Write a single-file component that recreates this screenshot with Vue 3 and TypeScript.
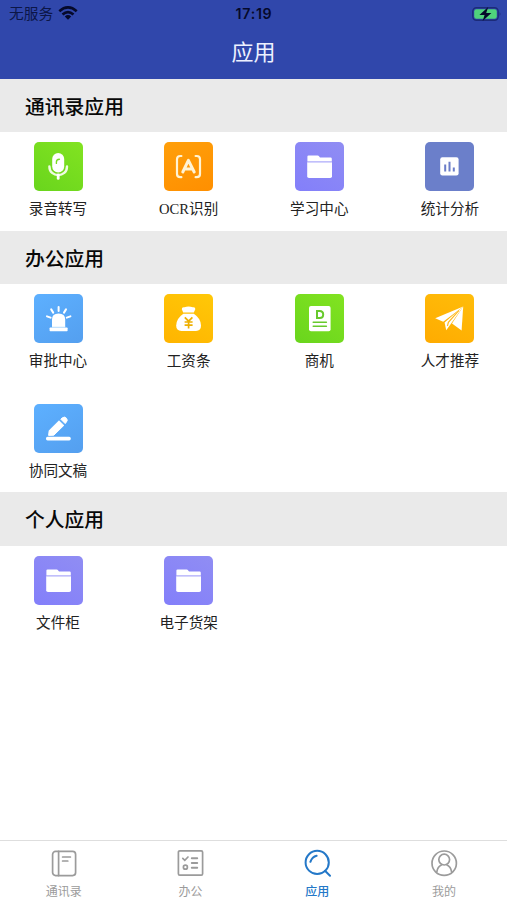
<script setup lang="ts">
type IconName = 'mic' | 'ocr' | 'folder' | 'chart' | 'alarm' | 'salary' | 'document' | 'plane' | 'pen'
type Tone = 'green' | 'orange' | 'violet' | 'indigo' | 'blue' | 'yellow' | 'amber'

interface AppEntry {
  label: string
  icon: IconName
  tone: Tone
}
interface Section {
  title: string
  apps: AppEntry[]
}
interface Tab {
  label: string
  icon: 'book' | 'list' | 'search' | 'user'
}

const sections: Section[] = [
  {
    title: '通讯录应用',
    apps: [
      { label: '录音转写', icon: 'mic', tone: 'green' },
      { label: 'OCR识别', icon: 'ocr', tone: 'orange' },
      { label: '学习中心', icon: 'folder', tone: 'violet' },
      { label: '统计分析', icon: 'chart', tone: 'indigo' },
    ],
  },
  {
    title: '办公应用',
    apps: [
      { label: '审批中心', icon: 'alarm', tone: 'blue' },
      { label: '工资条', icon: 'salary', tone: 'yellow' },
      { label: '商机', icon: 'document', tone: 'green' },
      { label: '人才推荐', icon: 'plane', tone: 'amber' },
      { label: '协同文稿', icon: 'pen', tone: 'blue' },
    ],
  },
  {
    title: '个人应用',
    apps: [
      { label: '文件柜', icon: 'folder', tone: 'violet' },
      { label: '电子货架', icon: 'folder', tone: 'violet' },
    ],
  },
]

const tabs: Tab[] = [
  { label: '通讯录', icon: 'book' },
  { label: '办公', icon: 'list' },
  { label: '应用', icon: 'search' },
  { label: '我的', icon: 'user' },
]
const activeTab = '应用'
</script>

<template>
  <div class="screen">
    <header class="header">
      <div class="status">
        <div class="carrier">
          <span>无服务</span>
          <svg class="wifi" width="20" height="14" viewBox="0 0 20 14">
            <g fill="none" stroke="#05092a" stroke-width="2.7">
              <path d="M1.3 5.2Q10-2.4 18.7 5.2" />
              <path d="M4.5 8.6Q10 3.8 15.5 8.6" />
            </g>
            <path d="M6.8 10.4Q10 7.7 13.2 10.4L10 13.7Z" fill="#05092a" />
          </svg>
        </div>
        <span class="time">17:19</span>
        <svg class="battery" width="30" height="16" viewBox="0 0 30 16">
          <rect x=".8" y="1.8" width="25.4" height="12.4" rx="3.6" fill="none" stroke="#1c2b78" stroke-width="1.4" />
          <rect x="2.2" y="3.2" width="22.6" height="9.6" rx="2.2" fill="#4fd37c" />
          <path d="M27.6 5.8Q29.4 8 27.6 10.2Z" fill="#1c2b78" />
          <path d="M16.2 1L7.4 8.9H12.6L10.6 15L19.4 6.9H14.2Z" fill="#05092a" />
        </svg>
      </div>
      <h1 class="title">应用</h1>
    </header>

    <main class="content">
      <section v-for="section in sections" :key="section.title">
        <h2 class="section-title">{{ section.title }}</h2>
        <div class="grid">
          <div v-for="app in section.apps" :key="app.label" class="app">
            <div class="tile" :class="app.tone">
              <svg width="49" height="49" viewBox="0 0 49 49">
                <g v-if="app.icon === 'mic'">
                  <rect x="18.2" y="11" width="12" height="19.6" rx="6" fill="#fff" />
                  <path d="M15.4 24.4C15.4 36 33 36 33 24.4" fill="none" stroke="#effbe2" stroke-width="2.4" stroke-linecap="round" />
                  <path d="M24.2 33V36.4" fill="none" stroke="#fff" stroke-width="2.8" stroke-linecap="round" />
                  <path d="M22.4 21.4V20Q22.4 17.4 25.4 17.2" fill="none" stroke="#79dc24" stroke-width="1.4" stroke-linecap="round" />
                </g>
                <g v-else-if="app.icon === 'ocr'" fill="none" stroke="#fff3d4" stroke-linecap="round">
                  <path d="M17.4 14H16.4Q13 14 13 17.2V32Q13 35.2 16.4 35.2H17.4M31.6 14H32.6Q36 14 36 17.2V32Q36 35.2 32.6 35.2H31.6" stroke-width="2.2" stroke-linejoin="round" />
                  <path d="M18.8 30L24.4 18.4L30.2 30M21.4 27H27.4" stroke-width="3" stroke-linejoin="round" />
                </g>
                <g v-else-if="app.icon === 'folder'">
                  <path d="M12.4 19.2V14.6Q12.4 13.4 13.6 13.4H22.6Q23.6 13.4 24.2 14.4L25 15.6H35.6Q36.8 15.6 36.8 16.8V19.2Z" fill="#fff" />
                  <path d="M12.2 20.2H37V34.2Q37 36 35.2 36H14Q12.2 36 12.2 34.2Z" fill="#fff" />
                  <path d="M12.4 19.1H36.8V20.4H12.4Z" fill="#c5c2fb" />
                </g>
                <g v-else-if="app.icon === 'chart'">
                  <rect x="15.2" y="15.2" width="18.4" height="18.2" rx="2.2" fill="#fff" />
                  <path d="M20.2 22.6V29.4M24.5 19.8V29.4M28.8 25.6V29.4" stroke="#6b7dc8" stroke-width="2" />
                </g>
                <g v-else-if="app.icon === 'alarm'" fill="#fff">
                  <path d="M18 33V25.6Q18 19.6 24.6 19.6T31.2 25.6V33Z" />
                  <rect x="15.6" y="33.6" width="18" height="3.6" rx=".7" />
                  <path d="M18 33.1H31.2" stroke="#d6edff" stroke-width="1" />
                  <path d="M24.6 13V17M17.2 15.4L19.2 18.6M32 15.4L30 18.6M13 22.4L16.6 23.6M36.4 22.4L32.8 23.6" fill="none" stroke="#fff" stroke-width="2" stroke-linecap="round" />
                </g>
                <g v-else-if="app.icon === 'salary'">
                  <path d="M19.2 18.6L17.8 15.2Q17.6 12.8 20.4 13.2Q24.5 11.6 28.8 13.2Q31.6 12.8 31.3 15.2L29.8 18.6Z" fill="#fff" />
                  <path d="M19.4 19.8H29.8Q37 24.6 37 31.6Q37 37 32 37H17.4Q12.2 37 12.2 31.6Q12.2 24.6 19.4 19.8Z" fill="#fff" />
                  <path d="M20.8 23.4L24.6 27.2L28.4 23.4M24.6 27.2V34.6M20.6 28H28.6M20.6 31.2H28.6" fill="none" stroke="#eeb000" stroke-width="1.7" />
                </g>
                <g v-else-if="app.icon === 'document'">
                  <rect x="14" y="12" width="21.6" height="25.2" rx="2" fill="#fff" />
                  <path d="M22 16.9H24.6Q28.2 16.9 28.2 20.4T24.6 23.9H22Z" fill="none" stroke="#67c92c" stroke-width="2" />
                  <path d="M18.2 28.2H31.4M18.2 32.2H31.4" stroke="#67c92c" stroke-width="1.5" stroke-linecap="round" />
                </g>
                <g v-else-if="app.icon === 'plane'" fill="#fff">
                  <path d="M38.2 12.6L10.2 24.2L18.2 27.8Z" />
                  <path d="M38.2 12.6L19.6 28.4L21.2 36.2L25.6 30.2Z" />
                  <path d="M38.2 12.6L27 29.6L36.6 36.6Z" />
                  <path d="M34 16.4L23.4 28.4L22.4 32" fill="none" stroke="#ffb921" stroke-width="1.2" />
                </g>
                <g v-else fill="#fff">
                  <path d="M14.6 31.4L15.2 26.6L25 16.8L29.8 21.4L19.8 31.2Z" stroke="#fff" stroke-width="1" stroke-linejoin="round" />
                  <path d="M26.8 15.2L28.4 13.8Q30.6 12.2 32.4 14.2T32.4 18L31.2 19.6Z" stroke="#fff" stroke-width="1" stroke-linejoin="round" />
                  <rect x="12" y="32.8" width="24.8" height="3.6" rx="1.6" />
                </g>
              </svg>
            </div>
            <span class="label">{{ app.label }}</span>
          </div>
        </div>
      </section>
    </main>

    <nav class="tabs">
      <div v-for="tab in tabs" :key="tab.label" class="tab" :class="{ active: tab.label === activeTab }">
        <svg width="28" height="28" viewBox="0 0 28 28" fill="none" stroke="currentColor" stroke-width="1.7" stroke-linecap="round">
          <g v-if="tab.icon === 'book'">
            <rect x="3.6" y="2.4" width="23" height="24.2" rx="3" />
            <path d="M9.6 2.4V26.6M13.6 8H21.4M13.6 12H18.8" />
          </g>
          <g v-else-if="tab.icon === 'list'">
            <rect x="2.4" y="1.8" width="24.2" height="24.4" rx="1.4" />
            <path d="M6.8 9.4L8.8 11.4L12 8" />
            <path d="M15.8 9.2H21.2M15.8 14H21.2M15.8 18.8H21.2" stroke-width="2" />
            <circle cx="9.4" cy="18.2" r="2" />
          </g>
          <g v-else-if="tab.icon === 'search'" stroke-width="2">
            <circle cx="14.2" cy="13.4" r="11.6" />
            <path d="M22 21.8L27 26.8M7.4 12.8Q9.2 7.8 13.6 6.8" />
          </g>
          <g v-else>
            <circle cx="14.2" cy="14.2" r="12.2" />
            <circle cx="14.2" cy="10.6" r="5.4" />
            <path d="M6.8 23Q7.6 17.6 11.4 16M21.6 23Q20.8 17.6 17 16" />
          </g>
        </svg>
        <span>{{ tab.label }}</span>
      </div>
    </nav>
  </div>
</template>

<style>
body {
  margin: 0;
  background: #fff;
}
</style>

<style scoped>
.screen {
  display: flex;
  flex-direction: column;
  height: 900px;
  overflow: hidden;
  background: #fff;
  color: #222;
  font-family: "Noto Sans CJK SC", sans-serif;
}
.header {
  box-sizing: border-box;
  height: 79px;
  flex: none;
  background: #3047ab;
}
.status {
  display: grid;
  grid-template-columns: 1fr auto 1fr;
  align-items: center;
  height: 27px;
  padding: 0 5px 0 9px;
  color: #05092a;
  font-size: 14.7px;
}
.carrier {
  display: flex;
  align-items: center;
  gap: 5px;
  height: 26px;
  color: #0c1647;
  line-height: 24px;
}
.carrier span {
  margin-top: -2px;
}
.wifi {
  margin-top: -1px;
}
.time {
  margin-right: 3px;
  font-family: Inter, sans-serif;
  font-size: 14.2px;
  font-weight: 600;
  letter-spacing: 0.7px;
}
.battery {
  justify-self: end;
}
.title {
  margin: 0;
  color: #edf1ff;
  font-size: 22px;
  font-weight: 400;
  line-height: 46px;
  text-align: center;
}
.content {
  flex: 1;
}
.section-title {
  height: 53.4px;
  margin: 0;
  padding-left: 25px;
  background: #eaeaea;
  color: #080808;
  font-size: 19.8px;
  font-weight: 500;
  line-height: 53px;
}
.grid {
  display: grid;
  grid-template-columns: repeat(4, 66px);
  justify-content: space-between;
  row-gap: 12px;
  margin-bottom: -9.7px;
  padding: 10px 24px 0 25px;
}
.app {
  display: flex;
  flex-direction: column;
  align-items: center;
  height: 98px;
}
.tile {
  width: 49px;
  height: 49px;
  border-radius: 5px;
}
.tile svg {
  display: block;
}
.green {
  background: linear-gradient(35deg, #69d51d, #82e321);
}
.orange {
  background: linear-gradient(160deg, #ff9f0a, #ff8f00);
}
.violet {
  background: linear-gradient(30deg, #837ffa, #908df3);
}
.indigo {
  background: #6b7fca;
}
.blue {
  background: linear-gradient(150deg, #5db0ff, #549fef);
}
.yellow {
  background: linear-gradient(25deg, #ffb400, #ffc808);
}
.amber {
  background: linear-gradient(25deg, #ffab00, #ffbd0a);
}
.label {
  margin-top: 7px;
  font-family: "Liberation Serif", "Noto Sans CJK SC", serif;
  font-size: 14.6px;
  line-height: 22px;
  white-space: nowrap;
}
.tabs {
  box-sizing: border-box;
  display: grid;
  grid-template-columns: repeat(4, 1fr);
  flex: none;
  height: 60px;
  border-top: 1px solid #dedede;
  background: #fff;
}
.tab {
  display: flex;
  flex-direction: column;
  align-items: center;
  padding-top: 8px;
  color: #9b9b9b;
  font-size: 12px;
  line-height: 18px;
}
.tab span {
  margin: 5px 0 0 1px;
}
.active {
  color: #2478c8;
  font-weight: 500;
}
</style>
